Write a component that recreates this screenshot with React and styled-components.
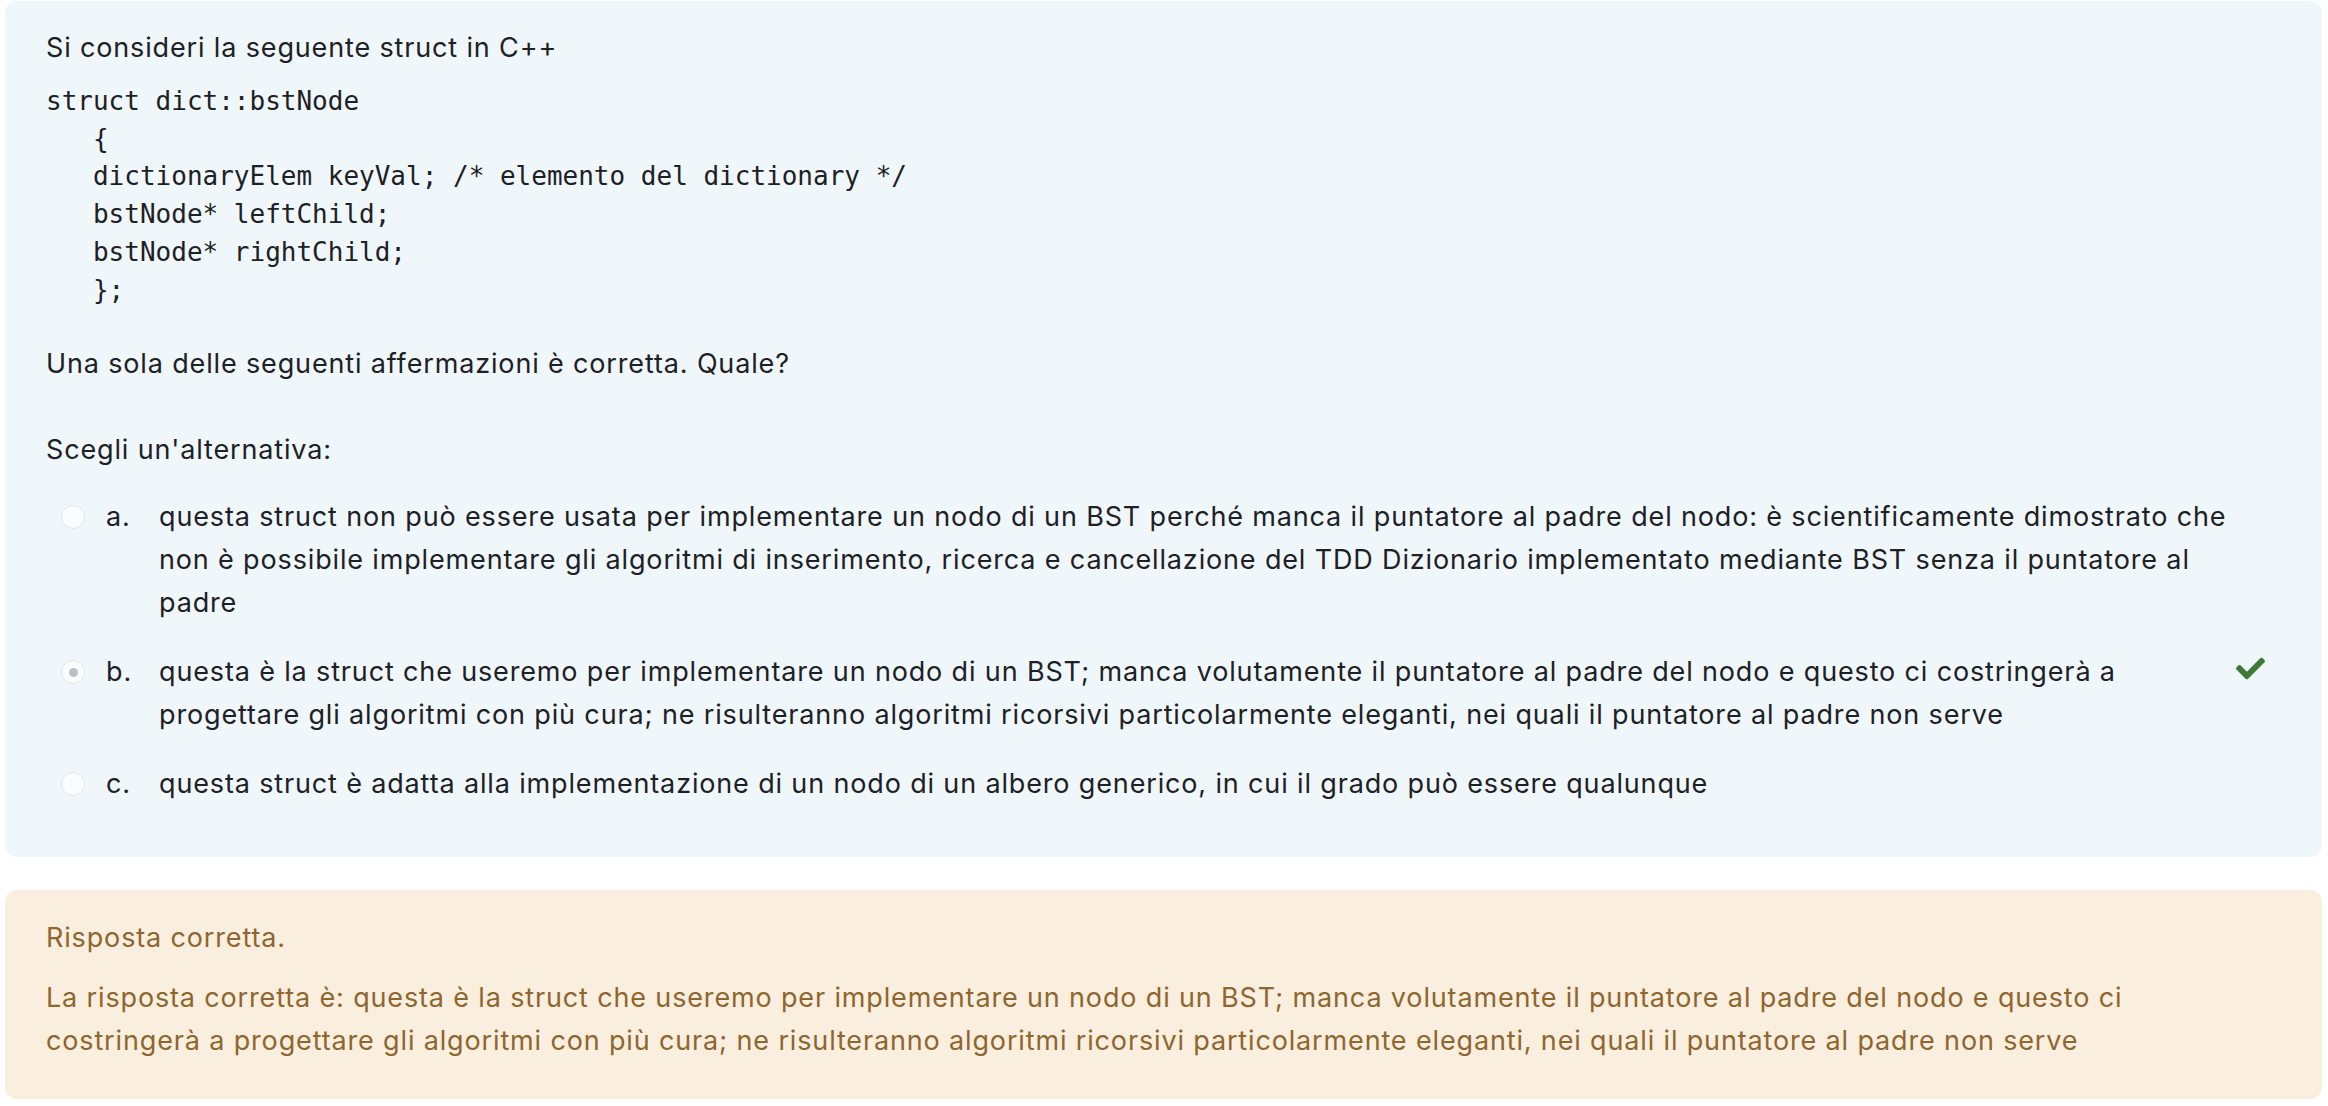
import React from 'react'
import styled, { createGlobalStyle } from 'styled-components'

const GlobalStyle = createGlobalStyle`
    body {
        margin: 0;
        padding: 1px 6px 0 5px;
        background: #ffffff;
        font-family: Inter, "Noto Sans", "Liberation Sans", sans-serif;
        color: #1d2125;
    }
`;

// lines are broken where the reference breaks them
const options = [
    {
        letter: 'a.',
        lines: [
            'questa struct non può essere usata per implementare un nodo di un BST perché manca il puntatore al padre del nodo: è scientificamente dimostrato che',
            'non è possibile implementare gli algoritmi di inserimento, ricerca e cancellazione del TDD Dizionario implementato mediante BST senza il puntatore al',
            'padre',
        ],
    },
    {
        letter: 'b.',
        lines: [
            'questa è la struct che useremo per implementare un nodo di un BST; manca volutamente il puntatore al padre del nodo e questo ci costringerà a',
            'progettare gli algoritmi con più cura; ne risulteranno algoritmi ricorsivi particolarmente eleganti, nei quali il puntatore al padre non serve',
        ],
        checked: true,
        correct: true,
    },
    {
        letter: 'c.',
        lines: ['questa struct è adatta alla implementazione di un nodo di un albero generico, in cui il grado può essere qualunque'],
    },
]

const rightAnswer = [
    'La risposta corretta è: questa è la struct che useremo per implementare un nodo di un BST; manca volutamente il puntatore al padre del nodo e questo ci',
    'costringerà a progettare gli algoritmi con più cura; ne risulteranno algoritmi ricorsivi particolarmente eleganti, nei quali il puntatore al padre non serve',
]

const code = `struct dict::bstNode
   {
   dictionaryElem keyVal; /* elemento del dictionary */
   bstNode* leftChild;
   bstNode* rightChild;
   };`

const withBreaks = (lines) =>
    lines.map((line, i) => (
        <React.Fragment key={i}>
            {i > 0 && <br />}
            {line}
        </React.Fragment>
    ))

function CheckIcon() {
    return (
        <svg viewBox="0 0 512 512" width="29" height="29" aria-hidden="true">
            <path
                fill="currentColor"
                d="M173.898 439.404l-166.4-166.4c-9.997-9.997-9.997-26.206 0-36.204l36.203-36.204c9.997-9.998 26.207-9.998 36.204 0L192 312.69 432.095 72.596c9.997-9.997 26.207-9.997 36.204 0l36.203 36.204c9.997 9.997 9.997 26.206 0 36.204l-294.4 294.401c-9.998 9.997-26.207 9.997-36.204-.001z"
            />
        </svg>
    )
}

function App() {
    return (
        <>
            <GlobalStyle />
            <QuestionStyled>
                <Formulation>
                    <Para>Si consideri la seguente struct in C++</Para>
                    <Code>{code}</Code>
                    <Para $gap="43px">Una sola delle seguenti affermazioni è corretta. Quale?</Para>
                    <Prompt>Scegli un'alternativa:</Prompt>
                    <AnswerList>
                        {options.map((opt) => (
                            <Option key={opt.letter}>
                                <Radio $checked={opt.checked} />
                                <Letter>{opt.letter}</Letter>
                                <OptionText>{withBreaks(opt.lines)}</OptionText>
                                {opt.correct && (
                                    <Feedback>
                                        <CheckIcon />
                                    </Feedback>
                                )}
                            </Option>
                        ))}
                    </AnswerList>
                </Formulation>
                <Outcome>
                    <OutcomeTitle>Risposta corretta.</OutcomeTitle>
                    <OutcomeText>{withBreaks(rightAnswer)}</OutcomeText>
                </Outcome>
            </QuestionStyled>
        </>
    )
}

const QuestionStyled = styled.div`
    display: flex;
    flex-direction: column;
    gap: 33px;
    font-size: 27px;
    letter-spacing: 0.85px;
    line-height: 43px;
`;

const Formulation = styled.div`
    background: #f0f7fb;
    border-radius: 12px;
    padding: 25px 41px 52px 41px;
`;

const Para = styled.p`
    margin: 0 0 ${(p) => p.$gap || '14px'};
`;

const Code = styled.pre`
    margin: 0 0 33px;
    font-family: "DejaVu Sans Mono", "Liberation Mono", monospace;
    font-size: 26px;
    letter-spacing: 0;
    line-height: 37.7px;
    color: #1d2125;
`;

const Prompt = styled.div`
    margin-bottom: 24px;
`;

const AnswerList = styled.div`
    display: flex;
    flex-direction: column;
    gap: 26px;
`;

const Option = styled.div`
    display: flex;
    align-items: flex-start;
`;

const Radio = styled.span`
    flex: none;
    box-sizing: border-box;
    width: 24px;
    height: 24px;
    margin: 10px 21px 0 15px;
    border-radius: 50%;
    border: 1.5px solid #e2e5e8;
    background: #fbfcfd;
    display: flex;
    align-items: center;
    justify-content: center;

    &::after {
        content: '';
        width: 9px;
        height: 9px;
        border-radius: 50%;
        background: ${(p) => (p.$checked ? '#bcc0c4' : 'transparent')};
    }
`;

const Letter = styled.span`
    flex: none;
    width: 53px;
`;

const OptionText = styled.div`
    flex: 1;
`;

const Feedback = styled.span`
    flex: none;
    color: #3d7a37;
    margin: 4px 16px 0 8px;
    display: flex;
`;

const Outcome = styled.div`
    background: #faeedf;
    border-radius: 12px;
    padding: 26px 41px 37px 41px;
    color: #8e662e;
`;

const OutcomeTitle = styled.div`
    margin-bottom: 17px;
`;

const OutcomeText = styled.div``;

export default App
